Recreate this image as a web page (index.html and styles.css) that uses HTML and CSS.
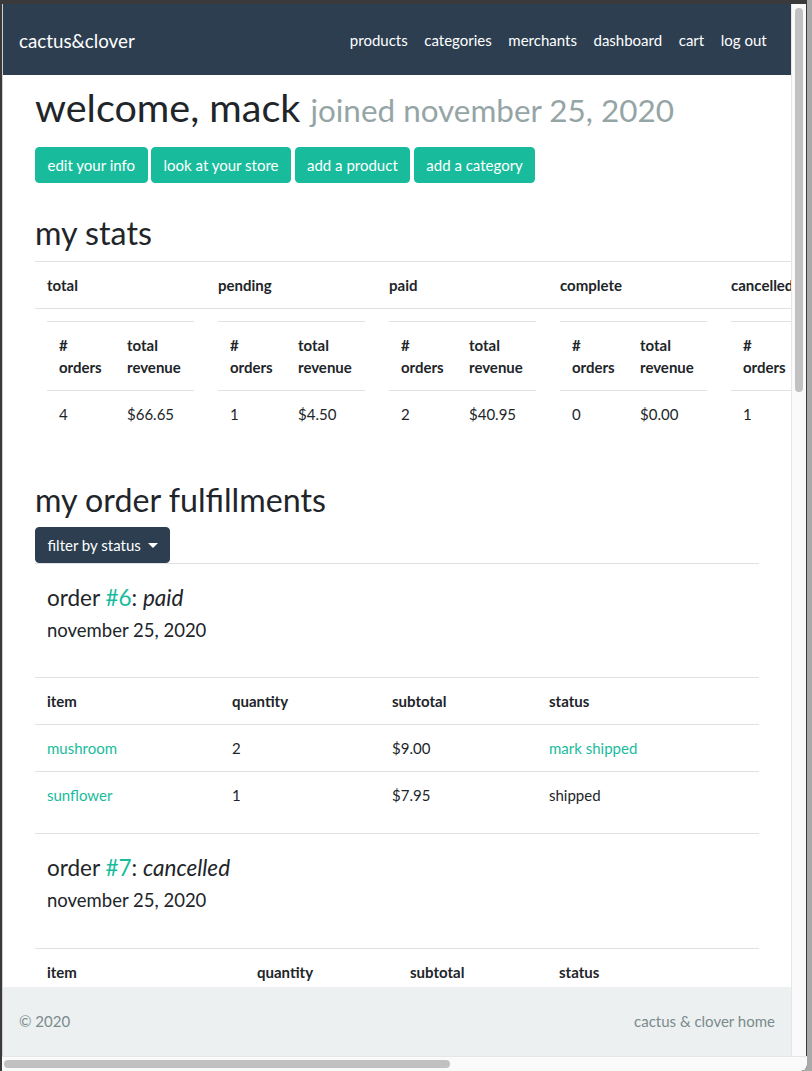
FILE: index.html
```html
<!DOCTYPE html>
<html lang="en">
<head>
<meta charset="utf-8">
<title>dashboard - cactus&amp;clover</title>
<link rel="stylesheet" href="styles.css">
</head>
<body>
<div class="window">
  <div class="window-main">
    <div class="viewport">
      <nav class="navbar">
        <a class="brand" href="#">cactus&amp;clover</a>
        <ul class="nav-links">
          <li><a href="#">products</a></li>
          <li><a href="#">categories</a></li>
          <li><a href="#">merchants</a></li>
          <li><a href="#">dashboard</a></li>
          <li><a href="#">cart</a></li>
          <li><a href="#">log out</a></li>
        </ul>
      </nav>

      <main class="container">
        <h1 class="welcome">welcome, mack <small class="muted">joined november 25, 2020</small></h1>
        <div class="actions">
          <a class="btn btn-success" href="#">edit your info</a>
          <a class="btn btn-success" href="#">look at your store</a>
          <a class="btn btn-success" href="#">add a product</a>
          <a class="btn btn-success" href="#">add a category</a>
        </div>

        <h2 class="section-title stats-title">my stats</h2>
        <table class="table stats-table">
          <thead>
            <tr>
              <th>total</th>
              <th>pending</th>
              <th>paid</th>
              <th>complete</th>
              <th>cancelled</th>
            </tr>
          </thead>
          <tbody>
            <tr>
              <td><table class="inner"><thead><tr><th class="c1"># orders</th><th>total revenue</th></tr></thead><tbody><tr><td>4</td><td>$66.65</td></tr></tbody></table></td>
              <td><table class="inner"><thead><tr><th class="c1"># orders</th><th>total revenue</th></tr></thead><tbody><tr><td>1</td><td>$4.50</td></tr></tbody></table></td>
              <td><table class="inner"><thead><tr><th class="c1"># orders</th><th>total revenue</th></tr></thead><tbody><tr><td>2</td><td>$40.95</td></tr></tbody></table></td>
              <td><table class="inner"><thead><tr><th class="c1"># orders</th><th>total revenue</th></tr></thead><tbody><tr><td>0</td><td>$0.00</td></tr></tbody></table></td>
              <td><table class="inner"><thead><tr><th class="c1"># orders</th><th>total revenue</th></tr></thead><tbody><tr><td>1</td><td>$21.20</td></tr></tbody></table></td>
            </tr>
          </tbody>
        </table>

        <h2 class="section-title orders-title">my order fulfillments</h2>
        <button class="btn btn-primary dropdown-toggle" type="button">filter by status</button>
        <hr class="rule">

        <section class="order">
          <h4 class="order-title">order <a href="#">#6</a>: <em>paid</em></h4>
          <h5 class="order-date">november 25, 2020</h5>
          <table class="table order-table order-a">
            <thead>
              <tr><th>item</th><th>quantity</th><th>subtotal</th><th>status</th></tr>
            </thead>
            <tbody>
              <tr><td><a href="#">mushroom</a></td><td>2</td><td>$9.00</td><td><a href="#">mark shipped</a></td></tr>
              <tr><td><a href="#">sunflower</a></td><td>1</td><td>$7.95</td><td>shipped</td></tr>
            </tbody>
          </table>
        </section>
        <hr class="rule">

        <section class="order">
          <h4 class="order-title">order <a href="#">#7</a>: <em>cancelled</em></h4>
          <h5 class="order-date">november 25, 2020</h5>
          <table class="table order-table order-b">
            <thead>
              <tr><th>item</th><th>quantity</th><th>subtotal</th><th>status</th></tr>
            </thead>
          </table>
        </section>
      </main>

      <footer class="footer">
        <span>© 2020</span>
        <a href="#">cactus &amp; clover home</a>
      </footer>
    </div>
    <div class="vscroll"><div class="vthumb"></div></div>
  </div>
  <div class="hscroll"><div class="hthumb"></div></div>
</div>
</body>
</html>
```
FILE: styles.css
```css
* { box-sizing: border-box; }
html, body {
  margin: 0;
  padding: 0;
  background: #a9a9a9;
}
body {
  font-family: Lato, "Noto Sans", "Liberation Sans", sans-serif;
  font-size: 15px;
  line-height: 1.5;
  color: #212529;
}
a { color: #18bc9c; text-decoration: none; }

.window {
  width: 807px;
  height: 1071px;
  background: #3a3a3a;
  padding: 4px 0 0 2px;
  display: flex;
  flex-direction: column;
  border-bottom-right-radius: 6px;
  overflow: hidden;
}
.window-main {
  display: flex;
  height: 1052px;
}
.viewport {
  position: relative;
  width: 789px;
  height: 1052px;
  overflow: hidden;
  background: #fff;
  border-left: 1px solid #cfcfcf;
}
.vscroll {
  width: 15px;
  background: #fafafa;
  border-left: 1px solid #e6e6e6;
  padding: 4px 3px 0 3px;
}
.vthumb {
  width: 8px;
  height: 384px;
  background: #c1c1c1;
  border-radius: 4px;
}
.hscroll {
  height: 15px;
  background: #fafafa;
  border-top: 1px solid #e6e6e6;
  padding: 3px 0 0 2px;
  border-bottom-right-radius: 6px;
}
.hthumb {
  width: 446px;
  height: 8px;
  background: #c1c1c1;
  border-radius: 4px;
}

/* navbar */
.navbar {
  height: 71px;
  background: #2c3e50;
  display: flex;
  align-items: center;
  justify-content: space-between;
  padding: 2px 16px 0;
}
.brand {
  color: #fff;
  font-size: 18.75px;
  line-height: 28px;
}
.nav-links {
  list-style: none;
  display: flex;
  margin: 0;
  padding: 0;
}
.nav-links a {
  color: #fff;
  padding: 8px 8.3px;
  display: block;
}

/* main */
.container {
  padding: 0 32px;
  width: 788px;
}
.welcome {
  font-size: 39.5px;
  font-weight: 400;
  line-height: 1.2;
  margin: 8px 0 16.5px;
}
.muted {
  color: #95a5a6;
  font-size: 79.6%;
  font-weight: 400;
}
.actions {
  display: flex;
  gap: 3.5px;
}
.btn {
  display: inline-block;
  font-family: inherit;
  font-size: 15px;
  line-height: 22.5px;
  padding: 6px 11.5px;
  border: 1px solid transparent;
  border-radius: 4px;
  color: #fff;
  cursor: pointer;
}
.btn-success { background: #18bc9c; border-color: #18bc9c; }
.btn-primary { background: #2c3e50; border-color: #2c3e50; }
.dropdown-toggle::after {
  content: "";
  display: inline-block;
  margin-left: 7px;
  vertical-align: 3px;
  border-top: 5px solid #fff;
  border-left: 5px solid transparent;
  border-right: 5px solid transparent;
}

.section-title {
  font-size: 32.2px;
  font-weight: 400;
  line-height: 1.2;
  margin: 0;
}
.stats-title { margin-top: 31px; margin-bottom: 7.5px; }
.orders-title { margin-top: 31px; margin-bottom: 7.5px; }

.table {
  border-collapse: collapse;
  margin-bottom: 15px;
}
.table th, .table td {
  text-align: left;
  vertical-align: top;
  padding: 12px;
  border-top: 1px solid #dee2e6;
}
.table th { font-weight: 700; }
.stats-table { width: 855px; table-layout: fixed; }
.stats-table > thead > tr > th { width: 171px; }
.inner {
  border-collapse: collapse;
  width: 147px;
  table-layout: fixed;
}
.inner th, .inner td {
  text-align: left;
  padding: 12px;
  border-top: 1px solid #dee2e6;
}
.inner th { font-weight: 700; line-height: 22px; }
.inner .c1 { width: 68px; }

.rule {
  border: 0;
  border-top: 1px solid #dee2e6;
  margin: 0;
}
.order {
  padding-top: 20px;
}
.order-title {
  font-size: 22.5px;
  font-weight: 400;
  line-height: 1.2;
  margin: 0 12px 8px;
}
.order-date {
  font-size: 18.5px;
  font-weight: 400;
  line-height: 1.2;
  margin: 0 12px 36px;
}
.order-table { width: 724px; table-layout: fixed; margin-bottom: 15px; }
.order-table th, .order-table td { padding: 12px 12px 11.5px; }
.order-a th:nth-child(1) { width: 185px; }
.order-a th:nth-child(2) { width: 160px; }
.order-a th:nth-child(3) { width: 157px; }
.order-b th:nth-child(1) { width: 210px; }
.order-b th:nth-child(2) { width: 153px; }
.order-b th:nth-child(3) { width: 149px; }

.footer {
  position: absolute;
  left: 0;
  right: 0;
  bottom: 0;
  height: 69px;
  background: #ecf0f1;
  display: flex;
  align-items: center;
  justify-content: space-between;
  padding: 0 16px;
  color: #7b8a8b;
}
.footer a { color: #7b8a8b; }
```
